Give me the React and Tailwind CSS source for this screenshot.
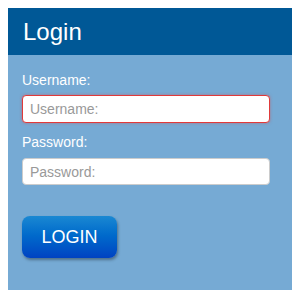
export default function App() {
  return (
    <div className="p-2 bg-white" style={{ fontFamily: '"Liberation Sans", Arial, sans-serif' }}>
      <div className="w-[284px] h-[282px] bg-[#76aad4]">
        <div className="h-[47px] bg-[#005896] px-[15px] flex items-center">
          <h1 className="text-[24px] leading-none text-white">Login</h1>
        </div>
        <div className="px-[14px] pt-[17px]">
          <label className="block text-[14px] leading-[16px] text-white">Username:</label>
          <input
            autoFocus
            className="mt-[7px] block w-[248px] h-[28px] rounded-[4px] border border-[#e03a3a] bg-white px-[7px] text-[14px] text-gray-700 placeholder:text-[#999] outline-none shadow-[0_0_3px_rgba(230,60,60,0.5)]"
            placeholder="Username:"
          />
          <label className="block mt-[11px] text-[14px] leading-[16px] text-white">Password:</label>
          <input
            type="password"
            className="mt-[8px] block w-[248px] h-[27px] rounded-[4px] border border-[#ccc] bg-white px-[7px] text-[14px] text-gray-700 placeholder:text-[#999] outline-none"
            placeholder="Password:"
          />
          <button className="mt-[31px] w-[95px] h-[42px] rounded-[8px] bg-gradient-to-b from-[#1a88d2] to-[#0042c2] text-white text-[18px] shadow-[1px_2px_3px_rgba(0,0,0,0.35)]">
            LOGIN
          </button>
        </div>
      </div>
    </div>
  )
}
